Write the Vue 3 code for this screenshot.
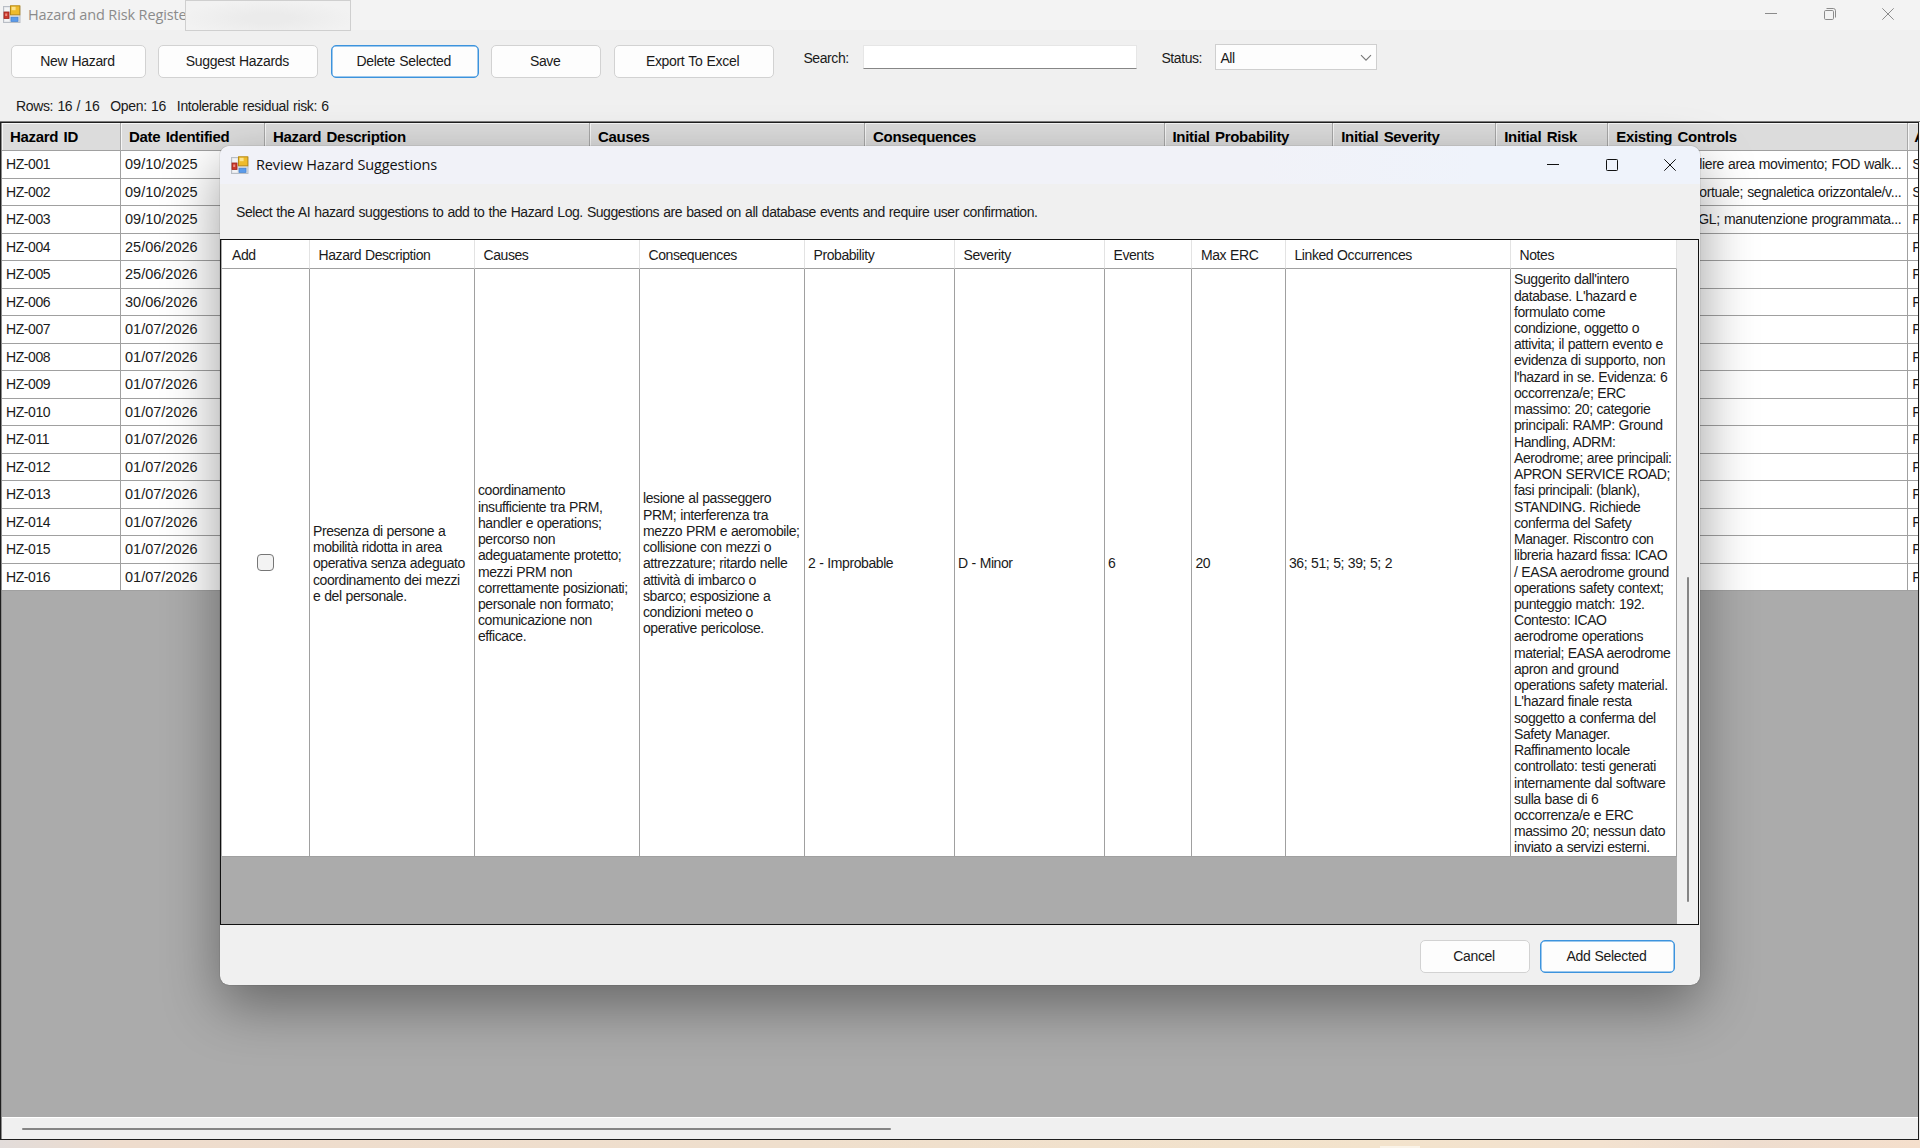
<template>
  <div class="desktop">
    <div class="window">
      <header class="titlebar">
        <svg class="app-icon" viewBox="0 0 18 18">
          <rect x="0.5" y="1.5" width="16.5" height="16" fill="#dcdfe3" stroke="#b9bec5" />
          <rect x="1.5" y="2.5" width="5" height="4" fill="#f2f4f6" />
          <rect x="1.5" y="13.5" width="5" height="3" fill="#f2f4f6" />
          <rect x="1" y="7" width="5" height="6.5" fill="#c83a2e" stroke="#a3251c" stroke-width="0.8" />
          <rect x="2.2" y="8.5" width="2" height="2.5" fill="#ee8d80" />
          <rect x="7.5" y="0.8" width="9.3" height="9" fill="#eebb2c" stroke="#b98b14" />
          <rect x="8.6" y="1.8" width="4" height="3.4" fill="#fbe38c" />
          <rect x="8" y="12.2" width="7" height="4.2" fill="#5b9bea" stroke="#3f7ed0" stroke-width="0.7" />
        </svg>
        <span class="title">Hazard and Risk Registe</span>
        <div class="title-mask"></div>
        <div class="caption-buttons">
          <svg viewBox="0 0 12 12"><path d="M0 5.5H12" /></svg>
          <svg viewBox="0 0 12 12">
            <rect x="0.5" y="2.5" width="9" height="9" rx="1.2" />
            <path d="M2.5 0.5H9.3Q11.5 0.5 11.5 2.7V9.5" />
          </svg>
          <svg viewBox="0 0 12 12"><path d="M0.3 0.3L11.7 11.7M11.7 0.3L0.3 11.7" /></svg>
        </div>
      </header>

      <div class="toolbar">
        <button
          v-for="button in toolbarButtons"
          :key="button.label"
          class="btn"
          :class="{ focused: button.focused }"
          :style="{ width: button.width + 'px' }"
        >{{ button.label }}</button>
        <label class="search-label">Search:</label>
        <input class="search" type="text" />
        <label class="status-label">Status:</label>
        <div class="combo">
          <span>All</span>
          <svg viewBox="0 0 12 8"><path d="M1 1.2L6 6.2L11 1.2" /></svg>
        </div>
      </div>

      <div class="summary">
        <span>Rows: 16 / 16</span>
        <span>Open: 16</span>
        <span>Intolerable residual risk: 6</span>
      </div>

      <div class="register">
        <div class="register-row register-head">
          <div v-for="(column, index) in registerColumns" :key="'head-' + index">{{ column }}</div>
        </div>
        <div class="register-row" v-for="row in hazards" :key="row.id">
          <div class="id">{{ row.id }}</div>
          <div class="date">{{ row.date }}</div>
          <div v-for="n in 6" :key="n"></div>
          <div class="controls"><span>{{ row.controls }}</span></div>
          <div>{{ row.next }}</div>
        </div>
        <div class="register-empty"></div>
        <div class="hscroll"><div class="hthumb"></div></div>
      </div>
    </div>
    <div class="wallpaper"><div class="dock"></div></div>

    <div class="dialog">
      <header class="dialog-title">
        <svg class="app-icon" viewBox="0 0 18 18">
          <rect x="0.5" y="1.5" width="16.5" height="16" fill="#dcdfe3" stroke="#b9bec5" />
          <rect x="1.5" y="2.5" width="5" height="4" fill="#f2f4f6" />
          <rect x="1.5" y="13.5" width="5" height="3" fill="#f2f4f6" />
          <rect x="1" y="7" width="5" height="6.5" fill="#c83a2e" stroke="#a3251c" stroke-width="0.8" />
          <rect x="2.2" y="8.5" width="2" height="2.5" fill="#ee8d80" />
          <rect x="7.5" y="0.8" width="9.3" height="9" fill="#eebb2c" stroke="#b98b14" />
          <rect x="8.6" y="1.8" width="4" height="3.4" fill="#fbe38c" />
          <rect x="8" y="12.2" width="7" height="4.2" fill="#5b9bea" stroke="#3f7ed0" stroke-width="0.7" />
        </svg>
        <span class="title">Review Hazard Suggestions</span>
        <div class="caption-buttons">
          <svg viewBox="0 0 12 12"><path d="M0 5.5H12" /></svg>
          <svg viewBox="0 0 12 12"><rect x="0.5" y="0.5" width="11" height="11" rx="0.8" /></svg>
          <svg viewBox="0 0 12 12"><path d="M0.3 0.3L11.7 11.7M11.7 0.3L0.3 11.7" /></svg>
        </div>
      </header>
      <p class="intro">Select the AI hazard suggestions to add to the Hazard Log. Suggestions are based on all database events and require user confirmation.</p>

      <div class="suggestions">
        <div class="grid-area">
          <div class="suggest-row suggest-head">
            <div v-for="column in suggestionColumns" :key="column">{{ column }}</div>
          </div>
          <div class="suggest-row suggest-body">
            <div class="check"><span class="checkbox"></span></div>
            <div v-for="(cell, index) in suggestion" :key="'cell-' + index">
              <p v-for="(line, n) in cell" :key="n">{{ line }}</p>
            </div>
          </div>
        </div>
        <div class="vscroll"><div class="vthumb"></div></div>
      </div>

      <footer class="dialog-footer">
        <button class="btn cancel">Cancel</button>
        <button class="btn add focused">Add Selected</button>
      </footer>
    </div>
  </div>
</template>

<script setup>
const toolbarButtons = [
  { label: 'New Hazard', width: 135 },
  { label: 'Suggest Hazards', width: 160 },
  { label: 'Delete Selected', width: 148, focused: true },
  { label: 'Save', width: 110 },
  { label: 'Export To Excel', width: 160 }
]

const registerColumns = [
  'Hazard ID', 'Date Identified', 'Hazard Description', 'Causes', 'Consequences',
  'Initial Probability', 'Initial Severity', 'Initial Risk', 'Existing Controls', 'A'
]

const dates = ['09/10/2025', '09/10/2025', '09/10/2025', '25/06/2026', '25/06/2026', '30/06/2026']
const controls = [
  'aliere area movimento; FOD walk...',
  'ortuale; segnaletica orizzontale/v...',
  'AGL; manutenzione programmata...'
]

const hazards = Array.from({ length: 16 }, (_, i) => ({
  id: 'HZ-' + String(i + 1).padStart(3, '0'),
  date: dates[i] || '01/07/2026',
  controls: controls[i] || '',
  next: i < 2 ? 'S' : 'F'
}))

const suggestionColumns = [
  'Add', 'Hazard Description', 'Causes', 'Consequences', 'Probability',
  'Severity', 'Events', 'Max ERC', 'Linked Occurrences', 'Notes'
]

// One array per cell, one string per wrapped line
const suggestion = [
  [
    'Presenza di persone a',
    'mobilità ridotta in area',
    'operativa senza adeguato',
    'coordinamento dei mezzi',
    'e del personale.'
  ],
  [
    'coordinamento',
    'insufficiente tra PRM,',
    'handler e operations;',
    'percorso non',
    'adeguatamente protetto;',
    'mezzi PRM non',
    'correttamente posizionati;',
    'personale non formato;',
    'comunicazione non',
    'efficace.'
  ],
  [
    'lesione al passeggero',
    'PRM; interferenza tra',
    'mezzo PRM e aeromobile;',
    'collisione con mezzi o',
    'attrezzature; ritardo nelle',
    'attività di imbarco o',
    'sbarco; esposizione a',
    'condizioni meteo o',
    'operative pericolose.'
  ],
  ['2 - Improbable'],
  ['D - Minor'],
  ['6'],
  ['20'],
  ['36; 51; 5; 39; 5; 2'],
  [
    "Suggerito dall'intero",
    "database. L'hazard e",
    'formulato come',
    'condizione, oggetto o',
    'attivita; il pattern evento e',
    'evidenza di supporto, non',
    "l'hazard in se. Evidenza: 6",
    'occorrenza/e; ERC',
    'massimo: 20; categorie',
    'principali: RAMP: Ground',
    'Handling, ADRM:',
    'Aerodrome; aree principali:',
    'APRON SERVICE ROAD;',
    'fasi principali: (blank),',
    'STANDING. Richiede',
    'conferma del Safety',
    'Manager. Riscontro con',
    'libreria hazard fissa: ICAO',
    '/ EASA aerodrome ground',
    'operations safety context;',
    'punteggio match: 192.',
    'Contesto: ICAO',
    'aerodrome operations',
    'material; EASA aerodrome',
    'apron and ground',
    'operations safety material.',
    "L'hazard finale resta",
    'soggetto a conferma del',
    'Safety Manager.',
    'Raffinamento locale',
    'controllato: testi generati',
    'internamente dal software',
    'sulla base di 6',
    'occorrenza/e e ERC',
    'massimo 20; nessun dato',
    'inviato a servizi esterni.'
  ]
]
</script>

<style>
body {
  margin: 0;
  overflow: hidden;
}
</style>

<style scoped>
* {
  box-sizing: border-box;
}

.desktop {
  position: relative;
  width: 1920px;
  height: 1148px;
  overflow: hidden;
  background: #f0f0f0;
  color: #1a1a1a;
  font-family: "Liberation Sans", Arial, sans-serif;
  font-size: 14px;
  letter-spacing: -0.42px;
  word-spacing: 0.4px;
}

.window {
  display: flex;
  flex-direction: column;
  height: 1140px;
}

/* Title bars */
.titlebar {
  position: relative;
  display: flex;
  align-items: center;
  height: 30px;
  padding: 0 13px 2px 3px;
  background: #f3f3f3;
  color: #8b8b8b;
}

.app-icon {
  width: 18px;
  height: 18px;
  margin-right: 7px;
}

.title {
  font-family: "Open Sans", "Noto Sans", sans-serif;
  font-size: 14.5px;
  letter-spacing: -0.13px;
  word-spacing: 0;
  white-space: nowrap;
}

.title-mask {
  position: absolute;
  left: 185px;
  top: 0;
  width: 166px;
  height: 31px;
  border: 1px solid #cfcfcf;
  background: radial-gradient(ellipse at 50% 60%, #ebebeb 20%, #f2f2f2 75%);
}

.caption-buttons {
  display: flex;
  gap: 46.5px;
  margin-left: auto;
  margin-right: 13px;
}

.caption-buttons svg {
  width: 12px;
  height: 12px;
  fill: none;
  stroke: currentColor;
  stroke-width: 1;
}

/* Toolbar */
.toolbar {
  display: flex;
  align-items: flex-start;
  height: 63px;
  padding: 15px 0 0 11px;
}

.btn {
  flex: none;
  height: 33px;
  margin: 0 12.4px 0 0;
  padding: 0 2px 1px 0;
  border: 1px solid #d2d2d2;
  border-radius: 5px;
  background: #fdfdfd;
  color: #1a1a1a;
  font: inherit;
  letter-spacing: -0.33px;
  word-spacing: 0.6px;
}

.btn.focused {
  border: 1.5px solid #3c93dd;
  box-shadow: inset 0 0 0 0.5px #3c93dd;
}

.search-label {
  width: 60px;
  margin: 5px 0 0 17.5px;
}

.search {
  width: 274px;
  height: 24px;
  border: 1px solid #e6e6e6;
  border-bottom: 1px solid #868686;
  background: #fff;
}

.status-label {
  width: 54px;
  margin: 5px 0 0 24px;
}

.combo {
  display: flex;
  align-items: center;
  justify-content: space-between;
  width: 162px;
  height: 26px;
  margin-top: -1px;
  padding: 1px 4px 0;
  border: 1px solid #cfcfcf;
  background: #fdfdfd;
}

.combo svg {
  width: 12px;
  height: 8px;
  fill: none;
  stroke: #777;
  stroke-width: 1.1;
}

.summary {
  display: flex;
  gap: 11px;
  height: 29px;
  padding: 5px 0 0 16px;
  border-bottom: 1px solid #7c7c7c;
  letter-spacing: -0.36px;
  word-spacing: 0.8px;
}

/* Hazard register */
.register {
  display: flex;
  flex: 1;
  flex-direction: column;
  width: 1919px;
  min-height: 0;
  padding-left: 1px;
  border: 1px solid #1e1e1e;
  background: #8c8c8c;
  overflow: hidden;
}

.register-row {
  display: grid;
  flex: none;
  grid-template-columns: 119px 144px 325px 275px 299.5px 168.7px 163px 112px 300px 9.8px;
  height: 27.5px;
  background: #fff;
}

.register-row > div {
  display: flex;
  align-items: center;
  overflow: hidden;
  padding-left: 4px;
  border-right: 1px solid #a0a0a0;
  border-bottom: 1px solid #a0a0a0;
  white-space: nowrap;
}

.register-row > div:last-child {
  border-right: none;
}

.register-row .date {
  font-size: 14.5px;
  letter-spacing: 0;
}

.register-row .controls {
  justify-content: flex-end;
  padding-right: 6px;
  letter-spacing: -0.38px;
  word-spacing: 0.7px;
}

.register-head {
  height: 28px;
}

.register-head > div {
  padding: 0 0 0 8px;
  border-right-color: #a8a8a8;
  background: #dcdcdc;
  box-shadow: inset 1px 1px 0 #f6f6f6;
  color: #000;
  font-size: 15px;
  font-weight: bold;
  letter-spacing: -0.3px;
  word-spacing: 1.5px;
}

.register-head > div:last-child {
  padding-left: 6px;
}

.register-empty {
  flex: 1;
  background: #ababab;
}

.hscroll {
  flex: none;
  height: 22px;
  padding: 10px 0 0 20px;
  border-top: 1px solid #fff;
  background: #f0f0f0;
}

.hthumb {
  width: 869px;
  height: 2px;
  border-radius: 1px;
  background: #858585;
}

.wallpaper {
  height: 8px;
  padding-left: 1380px;
  background: linear-gradient(90deg, #e2dcda 0, #eedccd 120px, #efdfcd 800px, #f3e3cc 1380px, #f3e2d0 1600px, #eeddcf 1750px, #f5dfcc 1920px);
}

.dock {
  width: 40px;
  height: 8px;
  border-top: 6px solid transparent;
  background: #faf3e8;
  background-clip: padding-box;
}

/* Suggestions dialog */
.dialog {
  position: absolute;
  left: 220px;
  top: 146px;
  display: flex;
  flex-direction: column;
  width: 1480px;
  height: 839px;
  border-radius: 9px;
  overflow: hidden;
  background: #f0f0f0;
  box-shadow: 0 20px 55px rgba(0, 0, 0, 0.4), 0 0 1px rgba(0, 0, 0, 0.6);
}

.dialog-title {
  display: flex;
  flex: none;
  align-items: center;
  height: 38px;
  padding: 0 0 1px 11px;
  background: linear-gradient(90deg, #f1f2f8 70%, #eff3fb 85%);
  color: #111;
}

.dialog-title .caption-buttons {
  margin-right: 24px;
}

.intro {
  flex: none;
  height: 55px;
  margin: 0;
  padding: 20px 0 0 16px;
  letter-spacing: -0.44px;
  word-spacing: 0.65px;
  white-space: nowrap;
}

.suggestions {
  display: flex;
  flex: none;
  height: 686px;
  margin-right: 1px;
  padding-left: 1px;
  border: 1px solid #111;
  background: #ababab;
}

.grid-area {
  width: 1455px;
}

.suggest-row {
  display: grid;
  grid-template-columns: 87.5px 165px 165px 165px 150px 150px 87.5px 93.5px 225px 166.5px;
  background: #fff;
}

.suggest-head {
  height: 29px;
}

.suggest-head > div {
  display: flex;
  align-items: center;
  padding: 2px 0 0 9px;
  border-right: 1px solid #e3e3e3;
  border-bottom: 1px solid #a0a0a0;
}

.suggest-head > div:first-child {
  padding-left: 10px;
}

.suggest-body {
  height: 588px;
}

.suggest-body > div {
  display: flex;
  flex-direction: column;
  justify-content: center;
  padding: 2px 0 0 3.5px;
  border-right: 1px solid #a0a0a0;
  border-bottom: 1px solid #a0a0a0;
}

.suggest-body p {
  margin: 0;
  line-height: 16.24px;
  white-space: nowrap;
}

.suggest-body .check {
  align-items: center;
  padding: 0;
}

.checkbox {
  width: 17px;
  height: 17px;
  border: 1px solid #767676;
  border-radius: 4px;
  background: #f3f3f3;
}

.vscroll {
  flex: 1;
  padding: 337px 0 0 10px;
  background: #f0f0f0;
}

.vthumb {
  width: 2px;
  height: 325px;
  border-radius: 1px;
  background: #858585;
}

.dialog-footer {
  display: flex;
  flex: 1;
  justify-content: flex-end;
  padding: 15px 25px 0 0;
}

.cancel {
  width: 110px;
  margin-right: 10px;
}

.add {
  width: 135px;
  margin-right: 0;
}
</style>
